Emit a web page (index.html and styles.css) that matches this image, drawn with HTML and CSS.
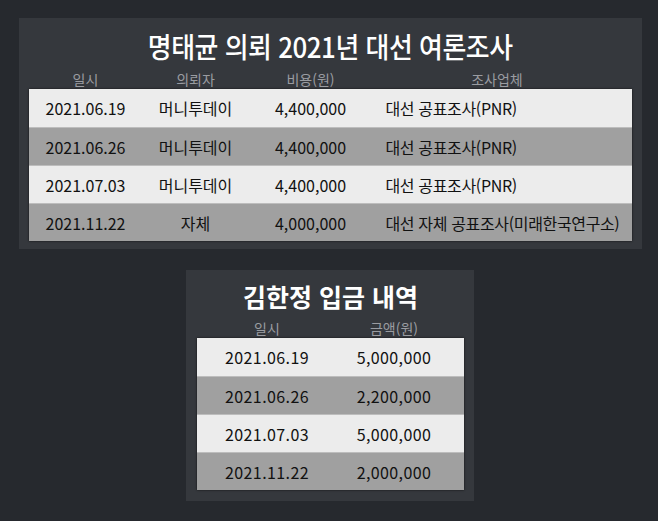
FILE: index.html
```html
<!DOCTYPE html>
<html lang="ko">
<head>
<meta charset="utf-8">
<link rel="stylesheet" href="styles.css">
</head>
<body>
<main class="page">
  <section class="panel panel-wide">
    <h1 class="title"><span class="title-text">명태균 의뢰 2021년 대선 여론조사</span></h1>
    <div class="grid grid-wide head">
      <div>일시</div><div>의뢰자</div><div>비용(원)</div><div class="c4">조사업체</div>
    </div>
    <div class="table">
      <div class="grid grid-wide row light"><div>2021.06.19</div><div>머니투데이</div><div>4,400,000</div><div class="left">대선 공표조사(PNR)</div></div>
      <div class="grid grid-wide row dark"><div>2021.06.26</div><div>머니투데이</div><div>4,400,000</div><div class="left">대선 공표조사(PNR)</div></div>
      <div class="grid grid-wide row light"><div>2021.07.03</div><div>머니투데이</div><div>4,400,000</div><div class="left">대선 공표조사(PNR)</div></div>
      <div class="grid grid-wide row dark"><div>2021.11.22</div><div>자체</div><div>4,000,000</div><div class="left">대선 자체 공표조사(미래한국연구소)</div></div>
    </div>
  </section>

  <section class="panel panel-narrow">
    <h1 class="title title-small"><span class="title-text">김한정 입금 내역</span></h1>
    <div class="grid grid-narrow head">
      <div>일시</div><div>금액(원)</div>
    </div>
    <div class="table">
      <div class="grid grid-narrow row light big"><div>2021.06.19</div><div>5,000,000</div></div>
      <div class="grid grid-narrow row dark big"><div>2021.06.26</div><div>2,200,000</div></div>
      <div class="grid grid-narrow row light big"><div>2021.07.03</div><div>5,000,000</div></div>
      <div class="grid grid-narrow row dark big"><div>2021.11.22</div><div>2,000,000</div></div>
    </div>
  </section>
</main>
</body>
</html>
```

FILE: styles.css
```css
* { box-sizing: border-box; }
html, body {
  margin: 0;
  padding: 0;
  background: #26292e;
}
body {
  font-family: "Noto Sans CJK KR", "Noto Sans", sans-serif;
  color: #111;
  width: 658px;
  height: 521px;
  overflow: hidden;
}
.page {
  display: flex;
  flex-direction: column;
  align-items: center;
  gap: 21px;
  padding-top: 18px;
  padding-left: 2px;
}
.panel {
  background: #35383d;
}
.panel-wide {
  width: 623px;
  padding: 0 10px 8px;
}
.panel-narrow {
  width: 288px;
  padding: 0 10px 11px 11px;
}
.title {
  margin: 0;
  padding-top: 9px;
  height: 47px;
  line-height: 38px;
  text-align: center;
  color: #fff;
  font-size: 28px;
  font-weight: 500;
}
.title-text {
  display: inline-block;
  transform: scaleX(0.925);
  letter-spacing: -0.5px;
}
.title-small {
  height: 44px;
  padding-top: 8px;
  line-height: 36px;
  font-size: 25px;
  font-weight: 700;
}
.title-small .title-text {
  transform: none;
  letter-spacing: 0;
}
.grid {
  display: grid;
  align-items: center;
}
.grid-wide {
  grid-template-columns: 114px 106px 124px 1fr;
}
.grid-narrow {
  grid-template-columns: 140px 114px 1fr;
}
.head {
  height: 24px;
  color: #9a9ca1;
  font-size: 14px;
  text-align: center;
  padding-top: 3px;
}
.head .c4 {
  padding-right: 10px;
}
.table {
  box-shadow: 0 0 2px rgba(0, 0, 0, 0.75);
}
.row {
  height: 38px;
  font-size: 16px;
  text-align: center;
  border-top: 1px solid #bdbdbd;
}
.row:first-child {
  border-top: 0;
  height: 38px;
}
.row .left {
  text-align: left;
  padding-left: 13px;
  white-space: nowrap;
  letter-spacing: -0.35px;
}
.light { background: #ececec; }
.dark { background: #a0a0a0; }
.big {
  font-size: 16px;
  letter-spacing: 0.4px;
}
```
